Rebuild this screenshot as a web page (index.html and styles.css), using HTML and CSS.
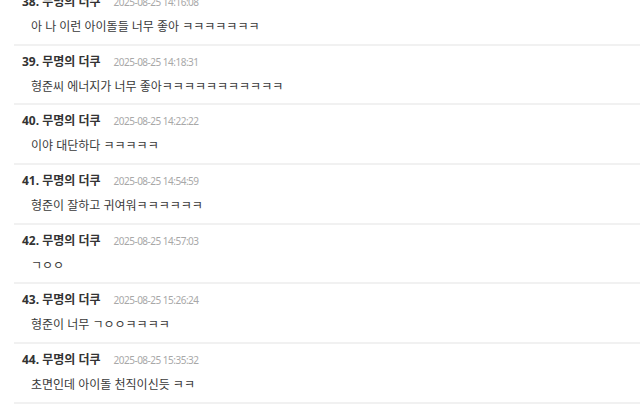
FILE: index.html
```html
<!DOCTYPE html>
<html lang="ko">
<head>
    <meta charset="UTF-8">
    <meta name="viewport" content="width=device-width, initial-scale=1.0">
    <title>댓글</title>
    <link rel="stylesheet" href="styles.css">
</head>
<body>
    <ul class="comment-list">
        <li class="comment">
            <div class="comment-head"><span class="nick">38. 무명의 더쿠</span><span class="date">2025-08-25 14:16:08</span></div>
            <div class="comment-body">아 나 이런 아이돌들 너무 좋아 ㅋㅋㅋㅋㅋㅋㅋ</div>
        </li>
        <li class="comment">
            <div class="comment-head"><span class="nick">39. 무명의 더쿠</span><span class="date">2025-08-25 14:18:31</span></div>
            <div class="comment-body">형준씨 에너지가 너무 좋아ㅋㅋㅋㅋㅋㅋㅋㅋㅋㅋㅋ</div>
        </li>
        <li class="comment">
            <div class="comment-head"><span class="nick">40. 무명의 더쿠</span><span class="date">2025-08-25 14:22:22</span></div>
            <div class="comment-body">이야 대단하다 ㅋㅋㅋㅋㅋ</div>
        </li>
        <li class="comment">
            <div class="comment-head"><span class="nick">41. 무명의 더쿠</span><span class="date">2025-08-25 14:54:59</span></div>
            <div class="comment-body">형준이 잘하고 귀여워ㅋㅋㅋㅋㅋㅋ</div>
        </li>
        <li class="comment">
            <div class="comment-head"><span class="nick">42. 무명의 더쿠</span><span class="date">2025-08-25 14:57:03</span></div>
            <div class="comment-body">ㄱㅇㅇ</div>
        </li>
        <li class="comment">
            <div class="comment-head"><span class="nick">43. 무명의 더쿠</span><span class="date">2025-08-25 15:26:24</span></div>
            <div class="comment-body">형준이 너무 ㄱㅇㅇㅋㅋㅋㅋ</div>
        </li>
        <li class="comment">
            <div class="comment-head"><span class="nick">44. 무명의 더쿠</span><span class="date">2025-08-25 15:35:32</span></div>
            <div class="comment-body">초면인데 아이돌 천직이신듯 ㅋㅋ</div>
        </li>
    </ul>
</body>
</html>
```

FILE: styles.css
```css
body {
    margin: 0;
    background: #ffffff;
    color: #333333;
    font-family: 'Noto Sans', 'Noto Sans CJK KR', sans-serif;
    overflow: hidden;
}
.comment-list {
    list-style: none;
    margin: -14px 0 0 14px;
    padding: 0;
}
.comment {
    padding: 8px 8px 8.7px;
    border-bottom: 2px solid #f1f1f1;
}
.comment-head {
    display: flex;
    align-items: baseline;
    gap: 13px;
    height: 16px;
    line-height: 16px;
}
.nick {
    font-size: 12px;
    font-weight: 700;
    color: #333333;
}
.date {
    font-size: 10px;
    color: #a8a8a8;
    letter-spacing: -0.5px;
}
.comment-body {
    margin-top: 9px;
    padding-left: 9px;
    font-size: 12px;
    line-height: 16px;
    color: #3a3a3a;
}
```
